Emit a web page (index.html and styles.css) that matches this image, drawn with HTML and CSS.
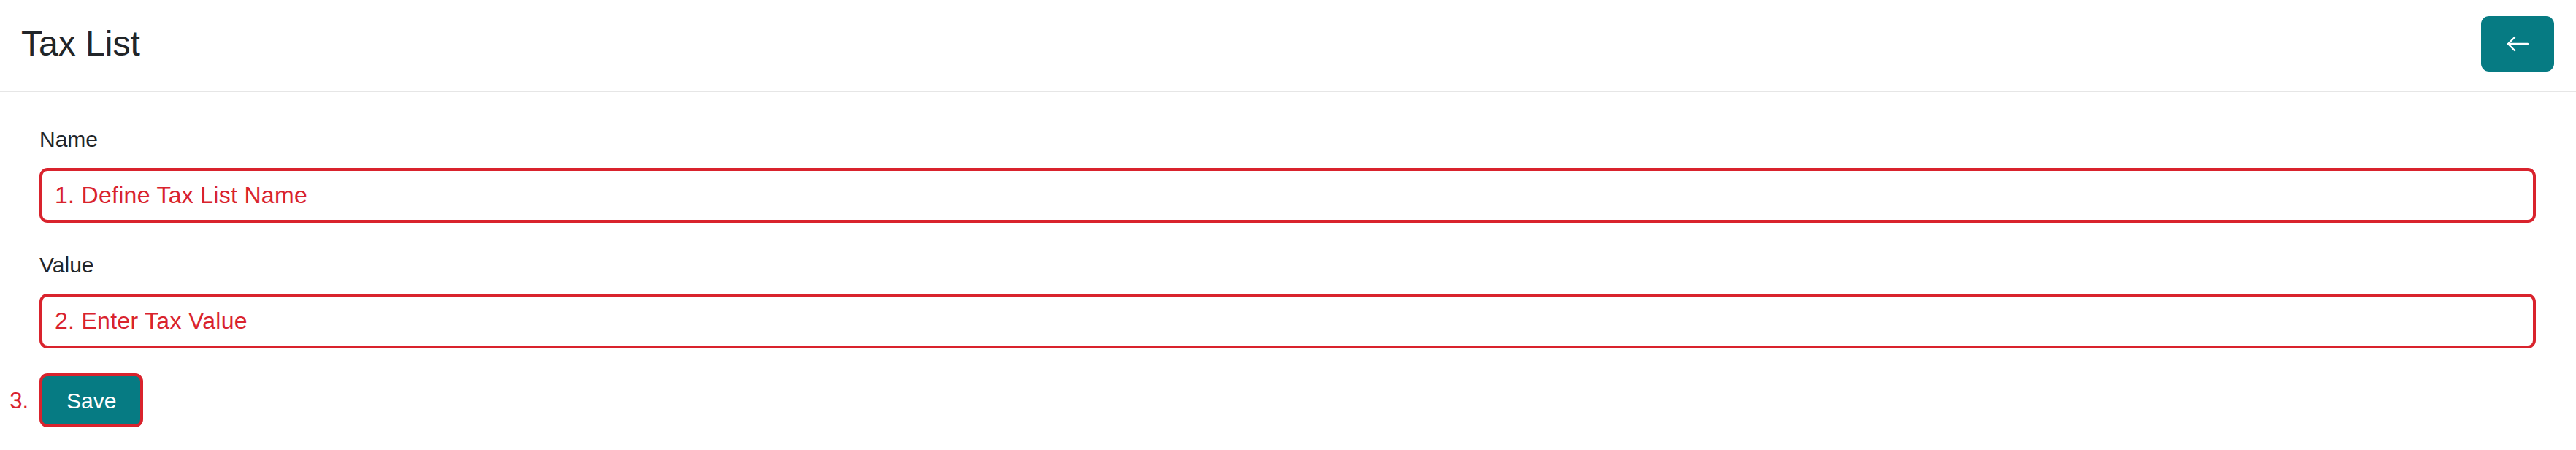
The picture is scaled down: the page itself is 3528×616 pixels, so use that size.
FILE: index.html
```html
<!DOCTYPE html>
<html>
  <head>
    <meta charset="utf-8">
    <meta name="viewport" content="width=device-width, initial-scale=1">
    <title>Tax List</title>
    <link rel="stylesheet" href="styles.css">
  </head>
  <body>
    <div class="header">
      <h1 class="title">Tax List</h1>
      <button class="backbtn" type="button" aria-label="Back">
        <svg width="30" height="22" viewBox="0 0 30 22" fill="none" stroke="#fff" stroke-width="2.4" stroke-linecap="round" stroke-linejoin="round">
          <path d="M2 11h27M11 2L2 11l9 9"/>
        </svg>
      </button>
    </div>

    <form class="content">
      <div class="group">
        <label class="label" for="name">Name</label>
        <input class="field" id="name" type="text" placeholder="1. Define Tax List Name">
      </div>

      <div class="group">
        <label class="label" for="value">Value</label>
        <input class="field" id="value" type="text" placeholder="2. Enter Tax Value">
      </div>

      <div class="actions">
        <span class="step">3.</span>
        <button class="savebtn" type="button">Save</button>
      </div>
    </form>
  </body>
</html>
```

FILE: styles.css
```css
body {
  margin: 0;
  font-family: "Liberation Sans", Arial, sans-serif;
  color: #212529;
  background: #fff;
}
.header {
  display: flex;
  align-items: center;
  justify-content: space-between;
  padding: 22px 30px 26px 29px;
  border-bottom: 2px solid #e6e6e6;
}
.title {
  margin: 0;
  font-size: 48px;
  font-weight: normal;
  line-height: 1.2;
}
.backbtn {
  display: flex;
  align-items: center;
  justify-content: center;
  width: 100px;
  height: 76px;
  padding: 0;
  border: none;
  border-radius: 11px;
  background: #067b83;
}
.content {
  padding: 42px 55px 0 54px;
  font-size: 30px;
  line-height: 45px;
}
.group {
  margin-bottom: 35px;
}
.group:nth-child(2) {
  margin-bottom: 34px;
}
.label {
  display: block;
  margin-bottom: 17px;
}
.field {
  display: block;
  box-sizing: border-box;
  width: 100%;
  height: 75px;
  padding: 11px 17px;
  border: 4px solid #d9232d;
  border-radius: 11px;
  font-family: inherit;
  font-size: 32px;
  letter-spacing: 0.3px;
  line-height: 45px;
  outline: none;
}
.field::placeholder {
  color: #d9232d;
  opacity: 1;
}
.actions {
  position: relative;
  display: flex;
  align-items: center;
}
.step {
  position: absolute;
  right: calc(100% + 15px);
  color: #d9232d;
  font-size: 31px;
}
.savebtn {
  box-sizing: border-box;
  height: 74px;
  padding: 0 33px;
  border: 4px solid #d9232d;
  border-radius: 11px;
  background: #067b83;
  color: #fff;
  font-family: inherit;
  font-size: 30px;
  line-height: 45px;
}
```
